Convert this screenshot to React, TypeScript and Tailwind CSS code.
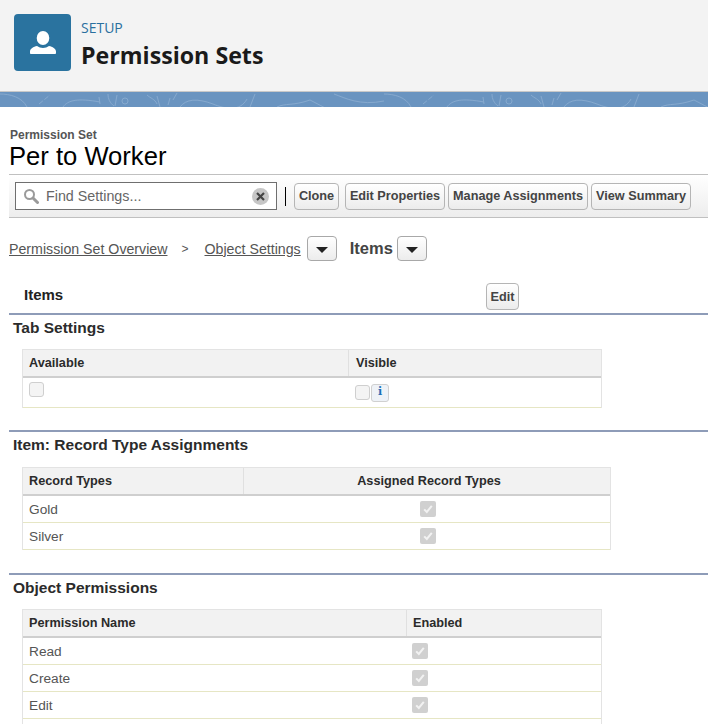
import { ReactNode } from "react";

const sans = "font-['Liberation_Sans',Arial,sans-serif]";

function Btn({ children, className = "" }: { children: ReactNode; className?: string }) {
  return (
    <button className={`h-[27px] rounded-[4px] border border-[#b5b5b5] bg-gradient-to-b from-white to-[#ececec] pt-[2px] text-[12.7px] font-bold text-[#444] text-center ${className}`}>
      {children}
    </button>
  );
}

function Caret() {
  return (
    <span className="flex h-[25px] w-[30px] items-center justify-center rounded-[4px] border border-[#a8a8a8] bg-gradient-to-b from-white to-[#ececec]">
      <span className="mt-[2px] h-0 w-0 border-x-[6px] border-t-[6px] border-x-transparent border-t-[#222]" />
    </span>
  );
}

function Check({ on = false }: { on?: boolean }) {
  if (!on) return <span className="block h-[15px] w-[15px] rounded-[3px] border border-[#cfcfcf] bg-[#f4f4f4]" />;
  return (
    <span className="flex h-[16px] w-[16px] items-center justify-center rounded-[2px] bg-[#d0d0d0]">
      <svg width="12" height="12" viewBox="0 0 12 12" fill="none">
        <path d="M2.2 6.4 4.8 9 9.8 2.8" stroke="#f2f2f2" strokeWidth="2" />
      </svg>
    </span>
  );
}

function Section({ title, mt, gap, children }: { title: string; mt: string; gap: string; children: ReactNode }) {
  return (
    <section className={`ml-[9px] ${mt} border-t-2 border-[#8e9cb8]`}>
      <h3 className="ml-[4px] mt-[1px] h-[23px] text-[15.5px] leading-[23px] font-bold text-[#2b2b2b]">{title}</h3>
      <div className={gap}>{children}</div>
    </section>
  );
}

function HeadCell({ children, className = "" }: { children: ReactNode; className?: string }) {
  return (
    <div className={`flex h-[26px] items-center bg-[#f2f2f2] pt-[2px] text-[12.7px] font-bold text-[#2b2b2b] ${className}`}>
      {children}
    </div>
  );
}

function Row({ name, col, center }: { name: string; col: string; center?: boolean }) {
  return (
    <div className="flex h-[27px] items-center border-b border-[#e6e6c4] text-[13.7px] text-[#555]">
      <span className={`pl-[6px] pt-[2px] ${col}`}>{name}</span>
      <span className={center ? "ml-[177px]" : "ml-[6px]"}>
        <Check on />
      </span>
    </div>
  );
}

export default function App() {
  return (
    <div className={`${sans} h-[724px] w-[708px] overflow-hidden bg-white`}>
      <header className="flex h-[92px] gap-[10px] border-b border-[#c8c8c8] bg-[#f3f3f3] pl-[14px] pt-[14px]">
        <div className="flex h-[57px] w-[57px] items-center justify-center rounded-[4px] bg-[#2a739f]">
          <svg width="26" height="26" viewBox="0 0 26 26" fill="white">
            <ellipse cx="13" cy="8" rx="6.3" ry="7" />
            <path d="M1 24c-.6 0-1-.5-1-1v-1.500c0-3 3.500-4.700 7-5.500 1.800 1.300 3.700 2 6 2s4.200-.7 6-2c3.500.8 7 2.500 7 5.500V23c0 .5-.4 1-1 1z" />
          </svg>
        </div>
        <div className="font-['Open_Sans',sans-serif]">
          <div className="mt-[4px] text-[14px] leading-[20px] text-[#2a6f9e]">SETUP</div>
          <h1 className="mt-[1px] text-[23.2px] leading-[32px] font-bold text-[#1a1a1a]">Permission Sets</h1>
        </div>
      </header>

      {/* topo-map texture, one tile every 384px */}
      <div className="h-[15px] overflow-hidden bg-[#6a94c0]">
        <svg width="708" height="15" viewBox="0 0 708 15" fill="none">
          <defs>
            <pattern id="topo" width="384" height="15" patternUnits="userSpaceOnUse">
              <g stroke="#86a9ce" strokeWidth="1">
                <path d="M0 2C10 2 22 5 27 15" />
                <path d="M39 12 50 3" strokeDasharray="5 2" />
                <path d="M63 15C68 8 78 6 100 10M99 5 100 12" />
                <path d="M108 2C108 7 110 11 114 14M117 3 115 14" />
                <circle cx="125" cy="9" r="3" />
                <path d="M147 3C150 6 155 7 157 12M157 4 160 15M168 13 170 6M177 1 173 8" />
                <path d="M180 15C186 7 197 6 213 12C225 17 240 20 247 7M255 2 250 15" />
                <path d="M277 15C285 11 293 14 310 8C316 11 325 16 333 20M334 2C345 6 360 14 384 9" />
              </g>
            </pattern>
          </defs>
          <rect width="708" height="15" fill="url(#topo)" />
        </svg>
      </div>

      <div className="pl-[10px] pt-[22px] text-[12px] leading-[13px] font-bold text-[#555]">Permission Set</div>
      <div className="pl-[9px] text-[25.6px] leading-[29px] text-black">Per to Worker</div>

      <div className="ml-[9px] mt-[3px] flex h-[44px] items-center border-y border-[#c0c0c0] bg-gradient-to-b from-white to-[#ededed] pl-[6px]">
        <div className="flex h-[28px] w-[262px] items-center border border-[#6f6f6f] bg-white pl-[7px] pr-[7px]">
          <svg width="16" height="16" viewBox="0 0 16 16" fill="none" stroke="#9a9a9a">
            <circle cx="6.500" cy="6.500" r="4.500" strokeWidth="2" />
            <path d="M10 10l4.500 4.500" strokeWidth="3" strokeLinecap="round" />
          </svg>
          <span className="ml-[7px] flex-1 pt-[2px] text-[14.3px] text-[#666]">Find Settings...</span>
          <span className="flex h-[17px] w-[17px] items-center justify-center rounded-full bg-[#c6c6c6]">
            <svg width="9" height="9" viewBox="0 0 9 9" stroke="#444" strokeWidth="2.200">
              <path d="M1 1l7 7M8 1 1 8" />
            </svg>
          </span>
        </div>
        <span className="ml-[8px] h-[19px] w-px bg-black" />
        <Btn className="ml-[8px] w-[45px]">Clone</Btn>
        <Btn className="ml-[6px] w-[100px]">Edit Properties</Btn>
        <Btn className="ml-[3px] w-[140px]">Manage Assignments</Btn>
        <Btn className="ml-[3px] w-[100px]">View Summary</Btn>
      </div>

      <nav className="mt-[18px] flex h-[25px] items-center pl-[9px] text-[14.2px] text-[#555]">
        <a className="mt-[2px] underline">Permission Set Overview</a>
        <span className="ml-[14px] text-[12px]">&gt;</span>
        <a className="ml-[16px] mt-[2px] underline">Object Settings</a>
        <span className="ml-[6px]"><Caret /></span>
        <b className="ml-[13px] text-[16.5px] text-[#444]">Items</b>
        <span className="ml-[4px]"><Caret /></span>
      </nav>

      <div className="mt-[22px] flex h-[30px] items-start pl-[24px]">
        <h2 className="mt-[3px] w-[462px] text-[15px] leading-[18px] font-bold text-[#222]">Items</h2>
        <Btn className="w-[33px]">Edit</Btn>
      </div>

      <Section title="Tab Settings" mt="mt-0" gap="mt-[10px]">
        <div className="ml-[13px] w-[580px] border-x border-t border-[#e3e3e3]">
          <div className="flex border-b-2 border-[#cfcfcf]">
            <HeadCell className="w-[325px] pl-[6px]">Available</HeadCell>
            <HeadCell className="flex-1 border-l border-[#e0e0e0] pl-[7px]">Visible</HeadCell>
          </div>
          <div className="flex h-[30px] border-b border-[#e6e6c4]">
            <div className="w-[325px] pl-[6px] pt-[4px]"><Check /></div>
            <div className="flex flex-1 items-center gap-[1px] pl-[7px]">
              <Check />
              <span className="flex h-[18px] w-[18px] items-center justify-center rounded-[3px] border border-[#d0d0d0] bg-[#eef2f7] font-['DejaVu_Serif',serif] text-[11px] font-bold text-[#1b6fb5]">i</span>
            </div>
          </div>
        </div>
      </Section>

      <Section title="Item: Record Type Assignments" mt="mt-[22px]" gap="mt-[11px]">
        <div className="ml-[13px] w-[589px] border-x border-t border-[#e3e3e3]">
          <div className="flex border-b-2 border-[#cfcfcf]">
            <HeadCell className="w-[220px] pl-[6px]">Record Types</HeadCell>
            <HeadCell className="flex-1 justify-center border-l border-[#e0e0e0] pl-[4px]">Assigned Record Types</HeadCell>
          </div>
          <Row name="Gold" col="w-[220px]" center />
          <Row name="Silver" col="w-[220px]" center />
        </div>
      </Section>

      <Section title="Object Permissions" mt="mt-[23px]" gap="mt-[10px]">
        <div className="ml-[13px] w-[580px] border-x border-t border-[#e3e3e3]">
          <div className="flex border-b-2 border-[#cfcfcf]">
            <HeadCell className="w-[383px] pl-[6px]">Permission Name</HeadCell>
            <HeadCell className="flex-1 border-l border-[#e0e0e0] pl-[6px]">Enabled</HeadCell>
          </div>
          <Row name="Read" col="w-[383px]" />
          <Row name="Create" col="w-[383px]" />
          <Row name="Edit" col="w-[383px]" />
          <div className="h-[27px]" />
        </div>
      </Section>
    </div>
  );
}
